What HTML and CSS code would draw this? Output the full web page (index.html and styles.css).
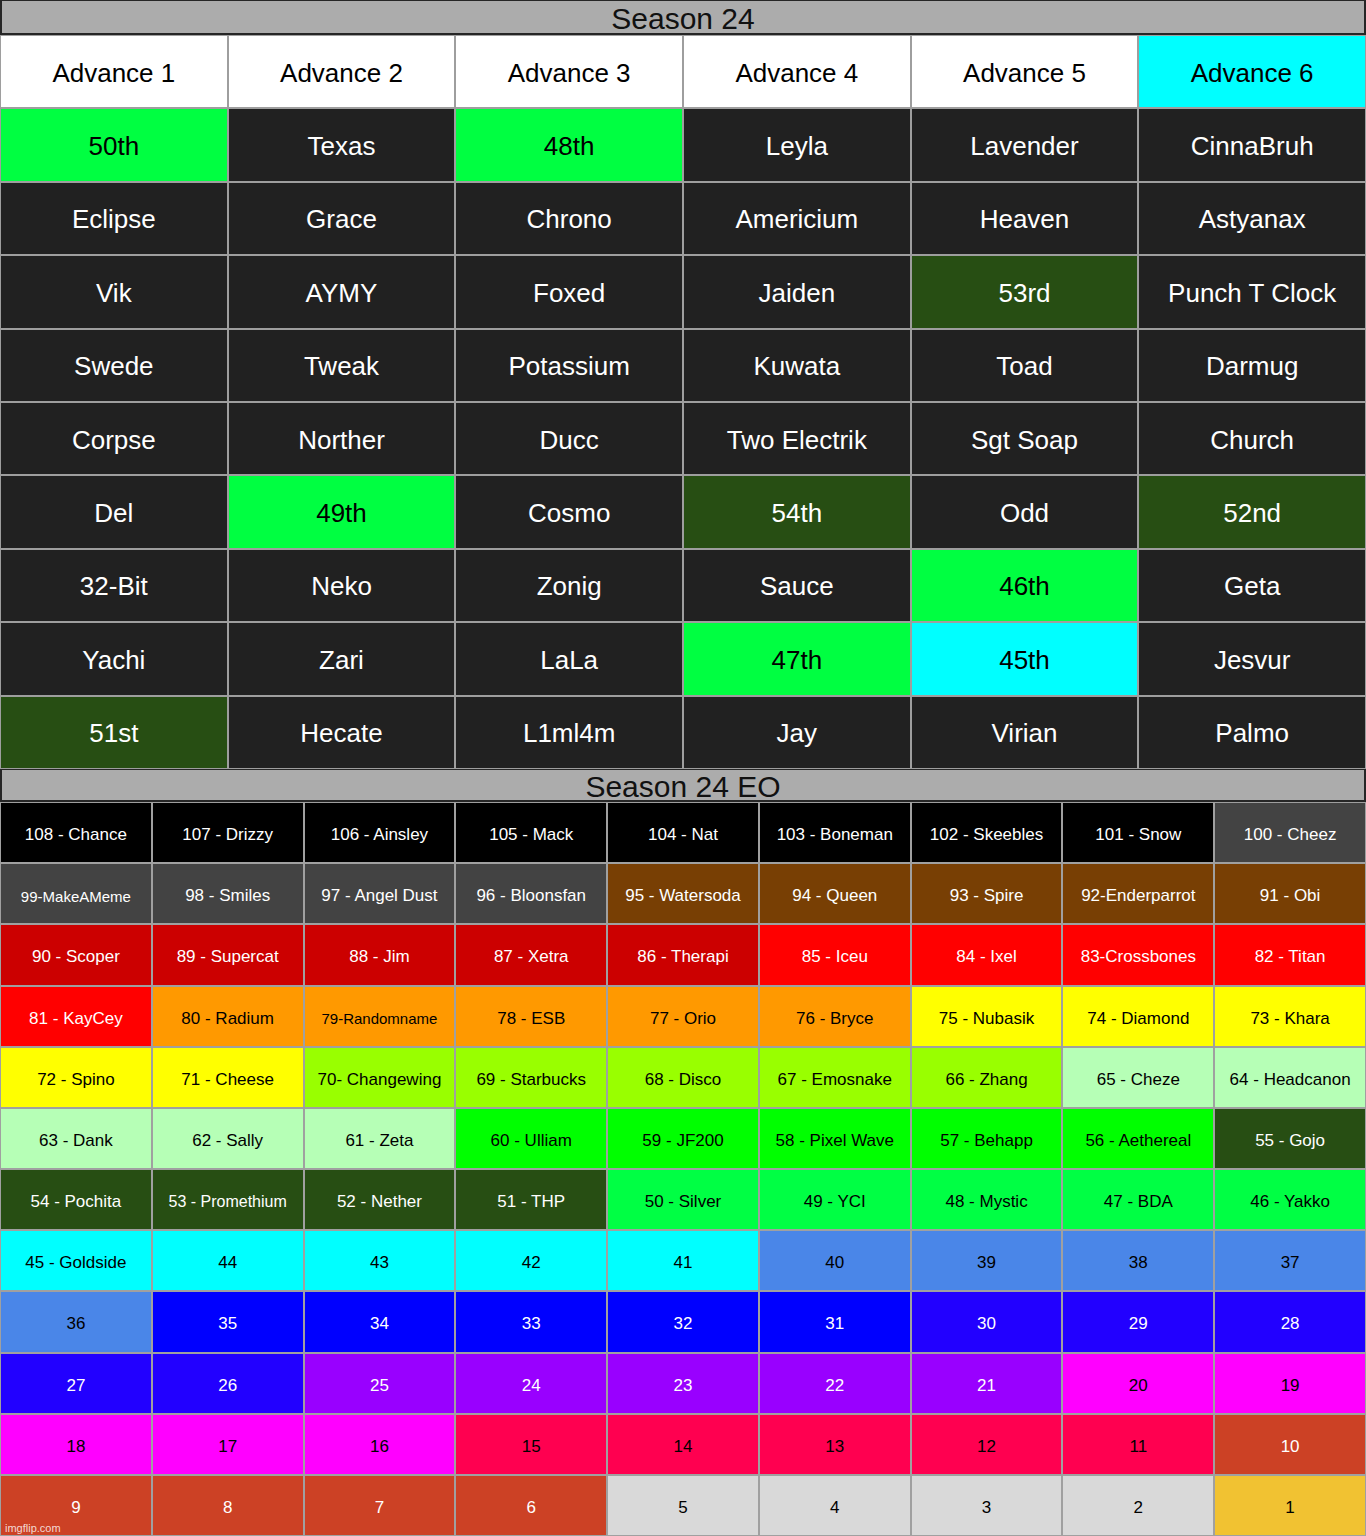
FILE: index.html
```html
<!DOCTYPE html>
<html>
<head>
<meta charset="utf-8">
<link rel="stylesheet" href="styles.css">
</head>
<body>
<div class="page">
  <div class="title t1">Season 24</div>
  <div class="grid6">
    <div class="c w">Advance 1</div><div class="c w">Advance 2</div><div class="c w">Advance 3</div><div class="c w">Advance 4</div><div class="c w">Advance 5</div><div class="c cy">Advance 6</div>
    <div class="c g">50th</div><div class="c d">Texas</div><div class="c g">48th</div><div class="c d">Leyla</div><div class="c d">Lavender</div><div class="c d">CinnaBruh</div>
    <div class="c d">Eclipse</div><div class="c d">Grace</div><div class="c d">Chrono</div><div class="c d">Americium</div><div class="c d">Heaven</div><div class="c d">Astyanax</div>
    <div class="c d">Vik</div><div class="c d">AYMY</div><div class="c d">Foxed</div><div class="c d">Jaiden</div><div class="c dg">53rd</div><div class="c d">Punch T Clock</div>
    <div class="c d">Swede</div><div class="c d">Tweak</div><div class="c d">Potassium</div><div class="c d">Kuwata</div><div class="c d">Toad</div><div class="c d">Darmug</div>
    <div class="c d">Corpse</div><div class="c d">Norther</div><div class="c d">Ducc</div><div class="c d">Two Electrik</div><div class="c d">Sgt Soap</div><div class="c d">Church</div>
    <div class="c d">Del</div><div class="c g">49th</div><div class="c d">Cosmo</div><div class="c dg">54th</div><div class="c d">Odd</div><div class="c dg">52nd</div>
    <div class="c d">32-Bit</div><div class="c d">Neko</div><div class="c d">Zonig</div><div class="c d">Sauce</div><div class="c g">46th</div><div class="c d">Geta</div>
    <div class="c d">Yachi</div><div class="c d">Zari</div><div class="c d">LaLa</div><div class="c g">47th</div><div class="c cy">45th</div><div class="c d">Jesvur</div>
    <div class="c dg">51st</div><div class="c d">Hecate</div><div class="c d">L1ml4m</div><div class="c d">Jay</div><div class="c d">Virian</div><div class="c d">Palmo</div>
  </div>
  <div class="title t2">Season 24 EO</div>
  <div class="grid9">
    <div class="e k">108 - Chance</div><div class="e k">107 - Drizzy</div><div class="e k">106 - Ainsley</div><div class="e k">105 - Mack</div><div class="e k">104 - Nat</div><div class="e k">103 - Boneman</div><div class="e k">102 - Skeebles</div><div class="e k">101 - Snow</div><div class="e gr">100 - Cheez</div>
    <div class="e gr sm">99-MakeAMeme</div><div class="e gr">98 - Smiles</div><div class="e gr">97 - Angel Dust</div><div class="e gr">96 - Bloonsfan</div><div class="e br">95 - Watersoda</div><div class="e br">94 - Queen</div><div class="e br">93 - Spire</div><div class="e br">92-Enderparrot</div><div class="e br">91 - Obi</div>
    <div class="e dr">90 - Scoper</div><div class="e dr">89 - Supercat</div><div class="e dr">88 - Jim</div><div class="e dr">87 - Xetra</div><div class="e dr">86 - Therapi</div><div class="e rd">85 - Iceu</div><div class="e rd">84 - Ixel</div><div class="e rd">83-Crossbones</div><div class="e rd">82 - Titan</div>
    <div class="e rd">81 - KayCey</div><div class="e or">80 - Radium</div><div class="e or xs">79-Randomname</div><div class="e or">78 - ESB</div><div class="e or">77 - Orio</div><div class="e or">76 - Bryce</div><div class="e ye">75 - Nubasik</div><div class="e ye">74 - Diamond</div><div class="e ye">73 - Khara</div>
    <div class="e ye">72 - Spino</div><div class="e ye">71 - Cheese</div><div class="e lm">70- Changewing</div><div class="e lm">69 - Starbucks</div><div class="e lm">68 - Disco</div><div class="e lm">67 - Emosnake</div><div class="e lm">66 - Zhang</div><div class="e lg">65 - Cheze</div><div class="e lg">64 - Headcanon</div>
    <div class="e lg">63 - Dank</div><div class="e lg">62 - Sally</div><div class="e lg">61 - Zeta</div><div class="e gn">60 - Ulliam</div><div class="e gn">59 - JF200</div><div class="e gn">58 - Pixel Wave</div><div class="e gn">57 - Behapp</div><div class="e gn">56 - Aethereal</div><div class="e dgr">55 - Gojo</div>
    <div class="e dgr">54 - Pochita</div><div class="e dgr sm2">53 - Promethium</div><div class="e dgr">52 - Nether</div><div class="e dgr">51 - THP</div><div class="e bg">50 - Silver</div><div class="e bg">49 - YCI</div><div class="e bg">48 - Mystic</div><div class="e bg">47 - BDA</div><div class="e bg">46 - Yakko</div>
    <div class="e cyn">45 - Goldside</div><div class="e cyn">44</div><div class="e cyn">43</div><div class="e cyn">42</div><div class="e cyn">41</div><div class="e cb">40</div><div class="e cb">39</div><div class="e cb">38</div><div class="e cb">37</div>
    <div class="e cb">36</div><div class="e bl">35</div><div class="e bl">34</div><div class="e bl">33</div><div class="e bl">32</div><div class="e bl">31</div><div class="e bv">30</div><div class="e bv">29</div><div class="e bv">28</div>
    <div class="e bv">27</div><div class="e bv">26</div><div class="e pu">25</div><div class="e pu">24</div><div class="e pu">23</div><div class="e pu">22</div><div class="e pu">21</div><div class="e mg">20</div><div class="e mg">19</div>
    <div class="e mg">18</div><div class="e mg">17</div><div class="e mg">16</div><div class="e rp">15</div><div class="e rp">14</div><div class="e rp">13</div><div class="e rp">12</div><div class="e rp">11</div><div class="e rb">10</div>
    <div class="e rb">9</div><div class="e rb">8</div><div class="e rb">7</div><div class="e rb">6</div><div class="e lt">5</div><div class="e lt">4</div><div class="e lt">3</div><div class="e lt">2</div><div class="e gd">1</div>
  </div>
  <div class="wm">imgflip.com</div>
</div>
</body>
</html>
```

FILE: styles.css
```css
html, body {
  margin: 0;
  padding: 0;
  background: #9e9e9e;
}
.page {
  position: relative;
  width: 1366px;
  height: 1536px;
  font-family: "Liberation Sans", Arial, sans-serif;
  display: flex;
  flex-direction: column;
  overflow: hidden;
}
.title {
  box-sizing: border-box;
  background: #acacac;
  border: 2px solid #262626;
  border-top-width: 1px;
  color: #111;
  font-size: 30px;
  padding-top: 3px;
  display: flex;
  align-items: center;
  justify-content: center;
}
.t1 {
  height: 35px;
  margin-bottom: 1px;
}
.t2 {
  height: 33px;
  margin: 1px 0 1px 0;
}
.grid6 {
  display: grid;
  grid-template-columns: repeat(6, 1fr);
  grid-template-rows: repeat(10, 1fr);
  gap: 2px;
  padding: 0 1px 0 1px;
  height: 732px;
  box-sizing: border-box;
  background: #9e9e9e;
}
.grid9 {
  display: grid;
  grid-template-columns: repeat(9, 1fr);
  grid-template-rows: repeat(12, 1fr);
  gap: 2px;
  padding: 0 1px 1px 1px;
  flex: 1;
  box-sizing: border-box;
  background: #a0a0a0;
}
.c {
  display: flex;
  align-items: center;
  justify-content: center;
  font-size: 26px;
  padding-top: 3px;
}
.e {
  display: flex;
  align-items: center;
  justify-content: center;
  font-size: 17px;
  white-space: nowrap;
  padding-top: 5px;
}
.sm { font-size: 15px; }
.xs { font-size: 15px; }
.sm2 { font-size: 16px; }

.w { background: #ffffff; color: #000; }
.cy { background: #00ffff; color: #000; }
.g { background: #00ff41; color: #000; }
.d { background: #212121; color: #fff; }
.dg { background: #274e13; color: #fff; }

.k { background: #000000; color: #fff; }
.gr { background: #434343; color: #fff; }
.br { background: #783f04; color: #fff; }
.dr { background: #cc0000; color: #fff; }
.rd { background: #ff0000; color: #fff; }
.or { background: #ff9900; color: #000; }
.ye { background: #ffff00; color: #000; }
.lm { background: #99ff00; color: #000; }
.lg { background: #b6ffb6; color: #000; }
.gn { background: #00ff00; color: #000; }
.dgr { background: #274e13; color: #fff; }
.bg { background: #00ff44; color: #000; }
.cyn { background: #00ffff; color: #000; }
.cb { background: #4a86e8; color: #000; }
.bl { background: #0000ff; color: #fff; }
.bv { background: #2200ff; color: #fff; }
.pu { background: #9900ff; color: #fff; }
.mg { background: #ff00ff; color: #000; }
.rp { background: #ff0050; color: #000; }
.rb { background: #cc4125; color: #fff; }
.lt { background: #d9d9d9; color: #000; }
.gd { background: #f1c232; color: #000; }

.wm {
  position: absolute;
  left: 5px;
  bottom: 2px;
  font-size: 11px;
  color: rgba(255, 255, 255, 0.8);
}
```
